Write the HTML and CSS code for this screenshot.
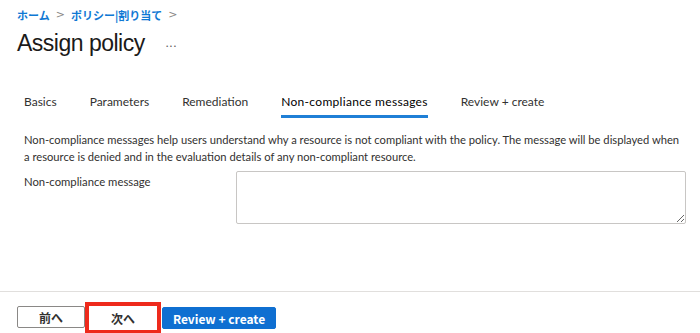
FILE: index.html
```
<!DOCTYPE html>
<html lang="ja">
<head>
    <meta charset="UTF-8" />
    <meta name="viewport" content="width=device-width, initial-scale=1.0" />
    <title>Assign policy</title>
    <link rel="stylesheet" href="styles.css">
</head>
<body>
    <header>
        <div class="breadcrumb">
            <a href="#">ホーム</a>
            <span class="sep">&gt;</span>
            <a href="#">ポリシー|割り当て</a>
            <span class="sep">&gt;</span>
        </div>
        <div class="title-row">
            <h1>Assign policy</h1>
            <span class="more">...</span>
        </div>
    </header>

    <nav class="tabs">
        <div class="tab">Basics</div>
        <div class="tab">Parameters</div>
        <div class="tab">Remediation</div>
        <div class="tab active">Non-compliance messages</div>
        <div class="tab">Review + create</div>
    </nav>

    <main class="content">
        <p class="desc">Non-compliance messages help users understand why a resource is not compliant with the policy. The message will be displayed when a resource is denied and in the evaluation details of any non-compliant resource.</p>
        <div class="field">
            <label for="msg">Non-compliance message</label>
            <textarea id="msg"></textarea>
        </div>
    </main>

    <footer>
        <button class="btn">前へ</button>
        <span class="highlight"><button class="btn next">次へ</button></span>
        <button class="btn primary">Review + create</button>
    </footer>
</body>
</html>
```

FILE: styles.css
```
body {
    font-family: "Lato", "Noto Sans CJK JP", sans-serif;
    margin: 0;
    height: 333px;
    overflow: hidden;
    background: #fff;
    color: #323130;
    display: flex;
    flex-direction: column;
}

header {
    padding: 7px 17px 0;
}

.breadcrumb {
    display: flex;
    align-items: center;
    gap: 6px;
    font-family: "Noto Sans CJK JP", sans-serif;
    font-size: 11px;
    font-weight: 700;
    line-height: 16px;
}

.breadcrumb a {
    color: #0f78d4;
    text-decoration: none;
}

.breadcrumb .sep {
    color: #8a8886;
    font-weight: 400;
    font-family: "DejaVu Sans", sans-serif;
    font-size: 11px;
}

.title-row {
    display: flex;
    align-items: center;
    gap: 21px;
    margin-top: 4px;
}

.title-row h1 {
    margin: 0;
    font-family: "Liberation Sans", sans-serif;
    font-weight: 400;
    font-size: 23px;
    letter-spacing: -0.5px;
    line-height: 32px;
    color: #1b1a19;
}

.title-row .more {
    font-size: 12px;
    color: #605e5c;
    margin-top: -2px;
    letter-spacing: 1px;
}

.tabs {
    display: flex;
    gap: 33px;
    padding: 0 24px;
    margin-top: 34px;
}

.tab {
    font-size: 12px;
    line-height: 18px;
    padding: 0 0 4px;
    border-bottom: 3px solid transparent;
    color: #323130;
}

.tab.active {
    border-bottom-color: #1f7fd6;
    color: #000;
    letter-spacing: 0.3px;
}

.content {
    flex-grow: 1;
    padding: 0 14px 0 24px;
}

.desc {
    margin: 13px 0 0;
    font-size: 11.2px;
    line-height: 17px;
}

.field {
    display: flex;
    margin-top: 6px;
}

.field label {
    width: 212px;
    font-size: 11.3px;
    padding-top: 4px;
}

.field textarea {
    width: 448px;
    height: 51px;
    border: 1px solid #c8c6c4;
    border-radius: 2px;
    padding: 0;
    margin: 0;
    resize: both;
}

footer {
    border-top: 1px solid #e1dfdd;
    display: flex;
    align-items: flex-start;
    padding: 14px 17px 0;
    height: 27px;
}

.btn {
    font-family: "Noto Sans CJK JP", sans-serif;
    font-size: 12px;
    font-weight: 700;
    height: 22px;
    padding: 0;
    border: 1px solid #8a8886;
    border-radius: 2px;
    background: #fff;
    color: #323130;
    width: 68px;
}

.highlight {
    display: flex;
    border: 4px solid #ee2a1c;
    padding: 1px;
    margin: -4px 0 0;
}

.btn.next {
    border-color: #fff;
    width: 66px;
}

.btn.primary {
    width: 114px;
    margin: 1px 0 0 1px;
    background: #0f6fd1;
    border-color: #0f6fd1;
    color: #fff;
}
```
